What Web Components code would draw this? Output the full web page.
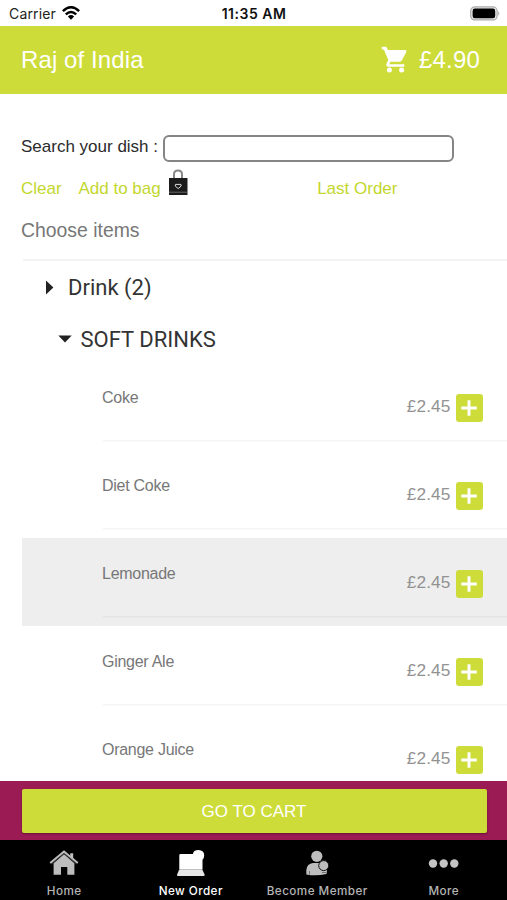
<!DOCTYPE html>
<html lang="en"><head><meta charset="utf-8"><title>Raj of India</title>
<style>html,body{margin:0;height:100%;overflow:hidden;background:#fff}</style></head>
<body><order-screen></order-screen>
<script>
const define = (name, css, html) => customElements.define(name, class extends HTMLElement {
  constructor() {
    super();
    this.attachShadow({mode: 'open'}).innerHTML =
      `<style>*{box-sizing:border-box}${css}</style>${typeof html === 'function' ? html(this) : html}`;
  }
});

define('status-bar', `
:host{display:grid;grid-template-columns:1fr auto 1fr;align-items:center;height:25.5px;padding:2px 7px 0 9px;background:#fff;color:#222;font:14px/20px Inter,sans-serif;letter-spacing:.15px}
.l{display:flex;align-items:center;gap:6px}b{font-weight:600;font-size:14px;color:#111;letter-spacing:.5px;margin-left:-1px}
.r{justify-self:end;display:flex}svg{display:block}.l svg{margin-top:-2px}.r svg{margin-top:-1px}`, `
<span class="l"><span>Carrier</span><svg width="18" height="14" viewBox="0 0 18 14"><g fill="none" stroke="#000" stroke-width="2.5"><path d="M.9 5.2Q9-2.6 17.1 5.2"/><path d="M3.8 8.4Q9 3.5 14.2 8.4"/></g><path d="M5.9 10.5Q9 7.7 12.1 10.5L9 13.8Z"/></svg></span>
<b>11:35 AM</b>
<span class="r"><svg width="30" height="15" viewBox="0 0 30 15"><rect x=".7" y=".9" width="26.4" height="13" rx="4" fill="#e8e8e8" stroke="#aaa" stroke-width="1.2"/><rect x="2.6" y="2.6" width="22.6" height="9.6" rx="2.3"/><path d="M28.2 5q2.2 2.4 0 4.8z" fill="#aaa"/></svg></span>`);

define('app-header', `
:host{display:flex;align-items:center;height:68px;padding:0 27px 0 21px;background:#cddc39;color:#fff;font:24px/30px "Liberation Sans",sans-serif}
span{flex:1;letter-spacing:.1px}svg{margin-right:11px}b{font-weight:400;letter-spacing:.2px}`, `
<span><slot></slot></span><svg width="27" height="27" viewBox="0 0 27 27" fill="#fff"><path d="M.8.8H5.2L7 4.1H24.2Q26 4.3 25.3 6L20.8 14.6Q20.1 15.7 18.8 15.7H9.4L8.3 18.2H23.3V20.7H7.2Q4.5 20 5.6 17.4L7.3 14.1 2.9 3.4H.8Z"/><circle cx="8.4" cy="24" r="2.5"/><circle cx="20.6" cy="24" r="2.5"/></svg><b><slot name="total"></slot></b>`);

define('dish-search', `
:host{display:block;padding:41.5px 0 0 21px;color:#2b2b2b;font:17px/24px "Liberation Sans",sans-serif}
label{display:flex;align-items:center;height:26px}label span{width:142px;margin-top:-2px;white-space:nowrap}
input{width:291px;height:27px;margin:0;border:2px solid #858585;border-radius:6px;background:#fff}
.a{display:flex;align-items:center;height:24px;margin-top:15.5px;color:#c3d72e}
.c{width:57.5px}svg{margin:-13px 0 0 7px}.o{margin-left:128.4px}
h2{margin:16.5px 0 0;font-weight:400;font-size:19.4px;line-height:26px;color:#777}
hr{border:0;height:2px;background:#f4f4f4;margin:16px 0 0 2px}`, `
<label><span>Search your dish :</span><input></label>
<div class="a"><span class="c">Clear</span><span>Add to bag</span><svg width="21" height="27" viewBox="0 0 21 27"><path d="M6 10V5.2Q6 1.4 10 1.4T14 5.2V10" fill="none" stroke="#888" stroke-width="2"/><path d="M1 9H19.5V26H1Z" fill="#1c1c1c"/><path d="M1 23.2H19.5" stroke="#888" stroke-width=".7"/><path d="M7.5 15.4H12.9L13.2 17 10.2 19.6 7.2 17Z" fill="none" stroke="#ddd"/></svg><span class="o">Last Order</span></div>
<h2>Choose items</h2><hr>`);

define('menu-heading', `
:host{display:flex;align-items:center;height:51px;color:#333;font:22px/28px Roboto,sans-serif}
:host([level="1"]){padding:3px 0 0 45px}:host([level="2"]){height:50.3px;padding:5px 0 0 58px}
svg{flex:none;margin-right:8.5px}:host([level="1"]) svg{margin:-1px 14px 0 0}:host([level="2"]) svg{margin-top:-2px}`,
el => (el.hasAttribute('open')
  ? '<svg width="14" height="8"><path d="M.3.5H13.7L7 7.6Z" fill="#222"/></svg>'
  : '<svg width="9" height="15"><path d="M1 .5V14.5L8.4 7.5Z" fill="#222"/></svg>') + '<span><slot></slot></span>');

define('dish-row', `
:host{display:grid;grid-template-columns:1fr auto 27.5px;column-gap:5px;height:88px;margin-left:22px;padding:0 24px 0 80px;align-items:start;
background:linear-gradient(#0000000a,#0000000a) 81px 77.5px/100% 1.5px no-repeat;font-family:"Liberation Sans",sans-serif}
:host([selected]){background-color:#eee}
.n{color:#777;font-size:16px;line-height:20px;margin-top:25.7px;letter-spacing:-.27px}
.p{color:#929292;font-size:17.3px;line-height:20px;margin-top:33.6px;letter-spacing:.1px}
button{display:grid;place-items:center;width:27.5px;height:28px;margin:31.5px 0 0;padding:0;border:0;border-radius:3px;background:#cddc39}`, `
<span class="n"><slot></slot></span><span class="p">£2.45</span><button aria-label="Add"><svg width="16" height="16"><path d="M8 .3V15.7M.3 8H15.7" stroke="#fff" stroke-width="3"/></svg></button>`);

define('cart-bar', `
:host{display:block;height:58.6px;padding:7.4px 20.5px 0 21.5px;background:#9b1b54}
button{display:block;width:100%;height:44px;padding:0;border:0;border-radius:2px;background:#cddc39;color:#fff;font:17px/45px "Liberation Sans",sans-serif;box-shadow:0 1px 2px #0005}`,
`<button><slot></slot></button>`);

define('tab-item', `
:host{display:flex;flex-direction:column;align-items:center;color:#b5b5b5;font:500 11.7px/14px Inter,sans-serif;letter-spacing:.45px;padding-top:9px}
:host([active]){color:#fff}.i{height:28px;margin-bottom:7px}svg{display:block}span{white-space:nowrap}`,
`<div class="i"><slot name="icon"></slot></div><span><slot></slot></span>`);

define('tab-bar', `
:host{display:grid;grid-template-columns:repeat(4,1fr);height:60px;padding-left:1px;background:#000}`, `
<tab-item>Home<svg slot="icon" width="30" height="28" viewBox="0 0 30 28"><path d="M4.6 14.3 15 5.3 25.4 14.3V25.8H18.3V18H12V25.8H4.6Z" fill="#bdbdbd"/><path d="M2.4 15 15 4.2 27.6 15" fill="none" stroke="#444" stroke-width="1"/><path d="M1.2 14 15 2.6 28.8 14" fill="none" stroke="#bdbdbd" stroke-width="1.9"/><path d="M21.2 4.3H24.2V10.5L21.2 8Z" fill="#bdbdbd"/></svg></tab-item>
<tab-item active>New Order<svg slot="icon" width="30" height="28" viewBox="0 0 30 28"><path d="M3.3 6.2Q3.3 5 4.5 5H17Q17.2 1 22.5.9 28.2 1.2 28.2 6.2 28.2 9.4 26.5 10.8V20.7H3.3Z" fill="#fff"/><path d="M3 21H26.5L28.7 25.8Q28.8 27 27.5 27H2Q.8 27 1 25.8Z" fill="#e6e6e6"/></svg></tab-item>
<tab-item>Become Member<svg slot="icon" width="24" height="28" viewBox="0 0 24 28"><circle cx="11.8" cy="7.3" r="5.6" fill="#bdbdbd"/><path d="M1.3 25.5V21Q2 14.6 8 14H14Q21.5 15 22 22L21.5 25Q11 27.4 1.3 25.5Z" fill="#bdbdbd"/><circle cx="18.7" cy="16.6" r="5" fill="#bdbdbd" stroke="#111" stroke-width="1"/><path d="M4.5 22V25.5M17 23.5H21" stroke="#555" stroke-width=".7"/></svg></tab-item>
<tab-item>More<svg slot="icon" width="32" height="28" viewBox="0 0 32 28" fill="#c4c4c4"><circle cx="5" cy="14.5" r="4.2"/><circle cx="15.7" cy="14.5" r="4.2"/><circle cx="26.3" cy="14.5" r="4.2"/></svg></tab-item>`);

define('order-screen', `
:host{display:flex;flex-direction:column;width:507px;height:900px;background:#fff}
main{flex:1;min-height:0;overflow:hidden}status-bar,app-header,cart-bar,tab-bar{flex:none}`, `
<status-bar></status-bar>
<app-header>Raj of India<span slot="total">£4.90</span></app-header>
<main><dish-search></dish-search>
<menu-heading level="1">Drink (2)</menu-heading>
<menu-heading level="2" open>SOFT DRINKS</menu-heading>
<dish-row>Coke</dish-row><dish-row>Diet Coke</dish-row><dish-row selected>Lemonade</dish-row><dish-row>Ginger Ale</dish-row><dish-row>Orange Juice</dish-row></main>
<cart-bar>GO TO CART</cart-bar><tab-bar></tab-bar>`);
</script></body></html>
